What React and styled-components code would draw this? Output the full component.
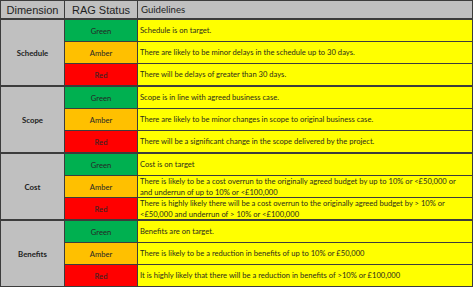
import React from 'react';
import styled, { createGlobalStyle } from 'styled-components';

const GlobalStyle = createGlobalStyle`
  html, body {
    margin: 0;
    padding: 0;
    background: #ffffff;
  }
`;

const COLORS = {
  Green: '#00b050',
  Amber: '#ffc000',
  Red: '#ff0000',
};

const Table = styled.div`
  width: 471px;
  display: flex;
  flex-direction: column;
  gap: 2px;
  background: #3c3c3c;
  border: 1px solid #3c3c3c;
  font-family: Lato, "Open Sans", sans-serif;
`;

const Grid = styled.div`
  display: grid;
  grid-template-columns: 63px 72px 1fr;
  grid-template-rows: ${props => props.$rows};
  column-gap: 1px;
  row-gap: 1px;
`;

const HeadCell = styled.div`
  background: #c0c0c0;
  color: #1e1e1e;
  display: flex;
  align-items: center;
  justify-content: ${props => (props.$left ? 'flex-start' : 'center')};
  padding-left: ${props => (props.$left ? '3px' : '0')};
  font-family: ${props => (props.$left ? 'Lato, "Open Sans", sans-serif' : '"Liberation Sans", Arial, sans-serif')};
  font-size: ${props => (props.$left ? '9.6px' : '11px')};
`;

const DimCell = styled.div`
  grid-row: span 3;
  background: #c0c0c0;
  color: #222;
  font-weight: bold;
  font-size: 7.8px;
  display: flex;
  align-items: center;
  justify-content: center;
`;

const StatusCell = styled.div`
  background: ${props => COLORS[props.$status]};
  color: #262626;
  font-size: 7.6px;
  display: flex;
  align-items: center;
  justify-content: center;
`;

const GuideCell = styled.div`
  background: #ffff00;
  color: #2c2c1c;
  font-size: 7.6px;
  line-height: 10.5px;
  display: flex;
  align-items: center;
  padding: 0 2px;
  white-space: pre-line;
`;

const data = [
  {
    name: 'Schedule',
    rows: [
      ['Green', 'Schedule is on target.'],
      ['Amber', 'There are likely to be minor delays in the schedule up to 30 days.'],
      ['Red', 'There will be delays of greater than 30 days.'],
    ],
  },
  {
    name: 'Scope',
    rows: [
      ['Green', 'Scope is in line with agreed business case.'],
      ['Amber', 'There are likely to be minor changes in scope to original business case.'],
      ['Red', 'There will be a significant change in the scope delivered by the project.'],
    ],
  },
  {
    name: 'Cost',
    rows: [
      ['Green', 'Cost is on target'],
      ['Amber', 'There is likely to be a cost overrun to the originally agreed budget by up to 10% or <£50,000 or\nand underrun of up to 10% or <£100,000'],
      ['Red', 'There is highly likely there will be a cost overrun to the originally agreed budget by > 10% or\n<£50,000 and underrun of > 10% or <£100,000'],
    ],
  },
  {
    name: 'Benefits',
    rows: [
      ['Green', 'Benefits are on target.'],
      ['Amber', 'There is likely to be a reduction in benefits of up to 10% or £50,000'],
      ['Red', 'It is highly likely that there will be a reduction in benefits of >10% or £100,000'],
    ],
  },
];

export default function App() {
  return (
    <>
      <GlobalStyle />
      <Table>
        <Grid $rows="17px">
          <HeadCell>Dimension</HeadCell>
          <HeadCell>RAG Status</HeadCell>
          <HeadCell $left>Guidelines</HeadCell>
        </Grid>
        {data.map(group => (
          <Grid key={group.name} $rows="repeat(3, 21px)">
            <DimCell>{group.name}</DimCell>
            {group.rows.map(([status, text]) => (
              <React.Fragment key={status}>
                <StatusCell $status={status}>{status}</StatusCell>
                <GuideCell>{text}</GuideCell>
              </React.Fragment>
            ))}
          </Grid>
        ))}
      </Table>
    </>
  );
}
